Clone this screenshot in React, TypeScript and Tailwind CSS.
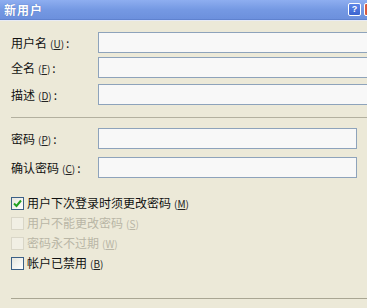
import React from "react";

const font = { fontFamily: '"Noto Sans CJK SC", "Noto Sans", sans-serif' };

function Mn({ c, disabled }: { c: string; disabled?: boolean }) {
  return (
    <span className={`text-[10px] ml-[3px] ${disabled ? "text-[#b9b6a6]" : "text-[#222]"}`}>
      (<span className="underline">{c}</span>)
    </span>
  );
}

function Field({ label, c, wide, h = 21 }: { label: string; c: string; wide?: boolean; h?: number }) {
  return (
    <div className="flex items-center" style={{ height: h }}>
      <div className="w-[87px] shrink-0 text-[12px] text-[#111] leading-none whitespace-nowrap">
        {label}
        <Mn c={c} />
        <span className="ml-[2px]">:</span>
      </div>
      <div
        className={`h-full shrink-0 border border-[#8ea3bb] bg-[#f8f8f8] ${wide ? "w-[300px]" : "w-[259px]"}`}
      />
    </div>
  );
}

function Check({ label, c, checked, disabled }: { label: string; c: string; checked?: boolean; disabled?: boolean }) {
  return (
    <div className="flex items-center h-[20px]">
      <div
        className={`w-[13px] h-[13px] border flex items-center justify-center ${
          disabled ? "border-[#d9d6c7] bg-[#f1efe4]" : "border-[#3b5f86] bg-gradient-to-br from-[#e6e6de] to-[#ffffff]"
        }`}
      >
        {checked && (
          <svg width="9" height="9" viewBox="0 0 9 9">
            <path d="M1 4.5 L3.5 7 L8 1.5" stroke="#21a121" strokeWidth="2" fill="none" />
          </svg>
        )}
      </div>
      <span className={`ml-[3px] text-[12px] leading-none ${disabled ? "text-[#b9b6a6]" : "text-[#111]"}`}>
        {label}
        <Mn c={c} disabled={disabled} />
      </span>
    </div>
  );
}

export default function App() {
  return (
    <div className="w-[367px] h-[308px] overflow-hidden bg-[#ece9d8] relative" style={font}>
      <div className="h-[20px] bg-gradient-to-b from-[#8eaef0] via-[#7599e3] to-[#6c90dd] border-b border-[#5f82cf] flex items-center justify-between pl-[4px]">
        <span className="text-white text-[12px] font-bold leading-none tracking-[1px]" style={{ textShadow: "0 0 1px #3a5fb0" }}>
          新用户
        </span>
        <div className="flex items-center gap-[3px] -mr-[10px]">
          <div className="w-[13px] h-[13px] rounded-[2px] border border-white bg-gradient-to-b from-[#5d86e8] to-[#3b63cf] flex items-center justify-center text-white text-[9px] font-bold leading-none" style={{ fontFamily: '"Liberation Sans", sans-serif' }}>
            ?
          </div>
          <div className="w-[13px] h-[13px] rounded-[2px] border border-white bg-[#d8593d]" />
        </div>
      </div>
      <div className="h-[1px] bg-[#e8ebf5]" />
      <div className="pl-[11px]">
        <div className="h-[11px]" />
        <Field label="用户名" c="U" wide />
        <div className="h-[4px]" />
        <Field label="全名" c="F" wide />
        <div className="h-[6px]" />
        <Field label="描述" c="D" wide />
        <div className="h-[12px]" />
        <div className="h-[1px] bg-[#b3b09f] mr-[-20px]" />
        <div className="h-[10px]" />
        <Field label="密码" c="P" />
        <div className="h-[8px]" />
        <Field label="确认密码" c="C" />
        <div className="h-[15px]" />
        <Check label="用户下次登录时须更改密码" c="M" checked />
        <Check label="用户不能更改密码" c="S" disabled />
        <Check label="密码永不过期" c="W" disabled />
        <Check label="帐户已禁用" c="B" />
        <div className="h-[25px]" />
        <div className="h-[1px] bg-[#a9a693] mr-[-20px]" />
      </div>
    </div>
  );
}
